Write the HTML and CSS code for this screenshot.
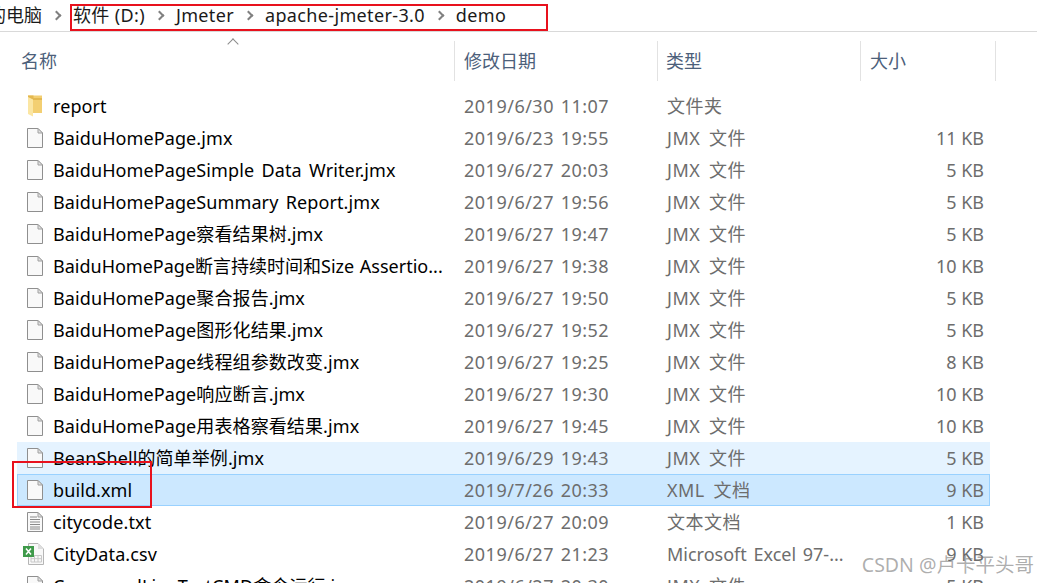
FILE: index.html
```html
<!DOCTYPE html>
<html lang="zh-CN">
<head>
  <meta charset="UTF-8">
  <title>demo</title>
  <link rel="stylesheet" href="styles.css">
</head>
<body>
  <svg class="defs" width="0" height="0">
    <symbol id="file" viewBox="0 0 18 22">
      <path d="M1.500 1.500H12L16.500 6V20.500H1.500Z" fill="#f9f9f9" stroke="#8f8f8f"/>
      <path d="M12 1.500V6H16.500Z" fill="#e2e2e2" stroke="#a0a0a0"/>
    </symbol>
    <symbol id="folder" viewBox="0 0 18 22">
      <path d="M2 0.500H16V18H2Z" fill="#f3cf72"/>
      <path d="M2 0.500H7.500V3H16V5H7L2 3Z" fill="#e3b850"/>
      <path d="M2 2L7 4.500V21.500L2 19Z" fill="#fbe6a3"/>
    </symbol>
    <symbol id="text" viewBox="0 0 18 22">
      <path d="M1.500 1.500H12L16.500 6V20.500H1.500Z" fill="#f9f9f9" stroke="#8f8f8f"/>
      <path d="M12 1.500V6H16.500Z" fill="#e2e2e2" stroke="#a0a0a0"/>
      <path d="M4 6H11M4 8.500H14M4 11H14M4 13.500H14M4 16H14M4 18H14" stroke="#8a8a8a"/>
    </symbol>
    <symbol id="excel" viewBox="0 0 22 24">
      <path d="M5.500 1.500H15L20.500 7V22.500H5.500Z" fill="#f8f8f8" stroke="#b5b5b5"/>
      <path d="M15 1.500V7H20.500Z" fill="#dedede"/>
      <path d="M8 13.500H18.500V20H8ZM8 16.700H18.500M11.500 13.500V20M15 13.500V20" fill="none" stroke="#c8c8c8"/>
      <rect x="0" y="4" width="11" height="11" fill="#3f9a4a"/>
      <path d="M3 6.500L8 12.500M8 6.500L3 12.500" stroke="#fff" stroke-width="1.500"/>
    </symbol>
  </svg>

  <!-- Address bar -->
  <div class="address">
    <span class="crumb crumb-root">我的电脑</span>
    <span class="sep sep-root"></span>
    <div class="path-box">
      <span class="crumb">软件 (D:)</span>
      <span class="sep"></span>
      <span class="crumb">Jmeter</span>
      <span class="sep"></span>
      <span class="crumb">apache-jmeter-3.0</span>
      <span class="sep"></span>
      <span class="crumb">demo</span>
    </div>
  </div>

  <!-- Column headers -->
  <div class="head">
    <div class="col-h col-h-name">名称<span class="sort"></span></div>
    <div class="col-h col-h-date">修改日期</div>
    <div class="col-h col-h-type">类型</div>
    <div class="col-h col-h-size">大小</div>
  </div>

  <!-- File list -->
  <div class="list">
    <div class="row">
      <svg class="ico"><use href="#folder"/></svg><span class="name">report</span>
      <span class="date">2019/6/30 11:07</span><span class="type">文件夹</span><span class="size"></span>
    </div>
    <div class="row">
      <svg class="ico"><use href="#file"/></svg><span class="name">BaiduHomePage.jmx</span>
      <span class="date">2019/6/23 19:55</span><span class="type">JMX 文件</span><span class="size">11 KB</span>
    </div>
    <div class="row">
      <svg class="ico"><use href="#file"/></svg><span class="name">BaiduHomePageSimple Data Writer.jmx</span>
      <span class="date">2019/6/27 20:03</span><span class="type">JMX 文件</span><span class="size">5 KB</span>
    </div>
    <div class="row">
      <svg class="ico"><use href="#file"/></svg><span class="name">BaiduHomePageSummary Report.jmx</span>
      <span class="date">2019/6/27 19:56</span><span class="type">JMX 文件</span><span class="size">5 KB</span>
    </div>
    <div class="row">
      <svg class="ico"><use href="#file"/></svg><span class="name">BaiduHomePage察看结果树.jmx</span>
      <span class="date">2019/6/27 19:47</span><span class="type">JMX 文件</span><span class="size">5 KB</span>
    </div>
    <div class="row">
      <svg class="ico"><use href="#file"/></svg><span class="name name-cut">BaiduHomePage断言持续时间和Size Assertio...</span>
      <span class="date">2019/6/27 19:38</span><span class="type">JMX 文件</span><span class="size">10 KB</span>
    </div>
    <div class="row">
      <svg class="ico"><use href="#file"/></svg><span class="name">BaiduHomePage聚合报告.jmx</span>
      <span class="date">2019/6/27 19:50</span><span class="type">JMX 文件</span><span class="size">5 KB</span>
    </div>
    <div class="row">
      <svg class="ico"><use href="#file"/></svg><span class="name">BaiduHomePage图形化结果.jmx</span>
      <span class="date">2019/6/27 19:52</span><span class="type">JMX 文件</span><span class="size">5 KB</span>
    </div>
    <div class="row">
      <svg class="ico"><use href="#file"/></svg><span class="name">BaiduHomePage线程组参数改变.jmx</span>
      <span class="date">2019/6/27 19:25</span><span class="type">JMX 文件</span><span class="size">8 KB</span>
    </div>
    <div class="row">
      <svg class="ico"><use href="#file"/></svg><span class="name">BaiduHomePage响应断言.jmx</span>
      <span class="date">2019/6/27 19:30</span><span class="type">JMX 文件</span><span class="size">10 KB</span>
    </div>
    <div class="row">
      <svg class="ico"><use href="#file"/></svg><span class="name">BaiduHomePage用表格察看结果.jmx</span>
      <span class="date">2019/6/27 19:45</span><span class="type">JMX 文件</span><span class="size">10 KB</span>
    </div>
    <div class="row row-hover">
      <svg class="ico"><use href="#file"/></svg><span class="name">BeanShell的简单举例.jmx</span>
      <span class="date">2019/6/29 19:43</span><span class="type">JMX 文件</span><span class="size">5 KB</span>
    </div>
    <div class="row row-selected">
      <svg class="ico"><use href="#file"/></svg><span class="name">build.xml</span>
      <span class="date">2019/7/26 20:33</span><span class="type">XML 文档</span><span class="size">9 KB</span>
    </div>
    <div class="row">
      <svg class="ico"><use href="#text"/></svg><span class="name">citycode.txt</span>
      <span class="date">2019/6/27 20:09</span><span class="type">文本文档</span><span class="size">1 KB</span>
    </div>
    <div class="row">
      <svg class="ico ico-wide"><use href="#excel"/></svg><span class="name">CityData.csv</span>
      <span class="date">2019/6/27 21:23</span><span class="type type-long">Microsoft Excel 97-...</span><span class="size">9 KB</span>
    </div>
    <div class="row">
      <svg class="ico"><use href="#file"/></svg><span class="name">CommandLineTestCMD命令运行.jmx</span>
      <span class="date">2019/6/27 20:30</span><span class="type">JMX 文件</span><span class="size">5 KB</span>
    </div>
  </div>

  <!-- Annotation and watermark over the list -->
  <div class="mark-build"></div>
  <div class="watermark">CSDN @卢卡平头哥</div>
</body>
</html>
```

FILE: styles.css
```css
html, body {
  height: 100%;
}
body {
  margin: 0;
  height: 583px;
  overflow: hidden;
  position: relative;
  background: #fff;
  color: #000;
  font-family: "Noto Sans", "Noto Sans CJK SC", sans-serif;
  font-size: 18px;
}
.defs {
  position: absolute;
}
/* Address bar */
.address {
  height: 31px;
  display: flex;
  align-items: flex-start;
  border-bottom: 1px solid #d9d9d9;
  margin-left: -30px;
}
.crumb {
  line-height: 30px;
  white-space: nowrap;
  color: #1a1a1a;
  letter-spacing: 0.35px;
}
.crumb-root {
  width: 72px;
  letter-spacing: 0;
}
.sep {
  flex: none;
  box-sizing: border-box;
  width: 7px;
  height: 7px;
  margin: 6px 13px 0 11px;
  border-top: 2px solid #808080;
  border-right: 2px solid #808080;
  transform: rotate(45deg);
}
.sep-root {
  margin: 12px 10px 0 11px;
}
.path-box {
  display: flex;
  align-items: flex-start;
  box-sizing: border-box;
  width: 478px;
  height: 27px;
  margin: 4px 0 0;
  padding-left: 1px;
  border: 2px solid #e8111d;
}
.path-box .crumb {
  margin-top: -6px;
}
/* Column headers */
.head {
  display: flex;
  height: 40px;
  margin-top: 9px;
  color: #4c607a;
}
.col-h {
  box-sizing: border-box;
  line-height: 40px;
  padding-left: 9px;
  border-right: 1px solid #e2e2e2;
  position: relative;
}
.col-h-name {
  width: 455px;
  padding-left: 21px;
}
.col-h-date {
  width: 203px;
}
.col-h-type {
  width: 203px;
  padding-left: 8px;
}
.col-h-size {
  width: 135px;
}
.sort {
  position: absolute;
  left: 229px;
  top: -1px;
  width: 7px;
  height: 7px;
  border-top: 1px solid #8a8a8a;
  border-left: 1px solid #8a8a8a;
  transform: rotate(45deg);
}
/* File list */
.list {
  margin: 9px 47px 0 17px;
}
.row {
  height: 32px;
  display: flex;
  align-items: center;
  line-height: 32px;
  color: #6d6d6d;
  white-space: nowrap;
}
.row-hover {
  background: #e5f3ff;
}
.row-selected {
  background: #cce8ff;
  box-shadow: inset 0 0 0 1px #99d1ff;
}
.ico {
  flex: none;
  width: 18px;
  height: 22px;
  margin: 0 9px;
}
.ico-wide {
  width: 22px;
  height: 24px;
  margin: 0 8px 0 6px;
}
.name {
  flex: none;
  width: 411px;
  color: #000;
  letter-spacing: 0.1px;
  word-spacing: 2.500px;
}
.name-cut {
  letter-spacing: 0;
  word-spacing: 1px;
}
.date {
  flex: none;
  width: 203px;
  letter-spacing: 0.5px;
  word-spacing: 1.500px;
}
.type {
  flex: none;
  width: 240px;
  letter-spacing: 0.5px;
  word-spacing: 3.500px;
}
.type-long {
  letter-spacing: 0;
  word-spacing: 2px;
}
.size {
  flex: none;
  width: 77px;
  text-align: right;
}
/* Red annotation box */
.mark-build {
  position: absolute;
  left: 12px;
  top: 461px;
  width: 136px;
  height: 43px;
  border: 2px solid #e8111d;
}
.watermark {
  position: absolute;
  right: 3px;
  top: 552px;
  font-size: 19.500px;
  line-height: 26px;
  color: rgba(120, 120, 120, 0.6);
}
```
